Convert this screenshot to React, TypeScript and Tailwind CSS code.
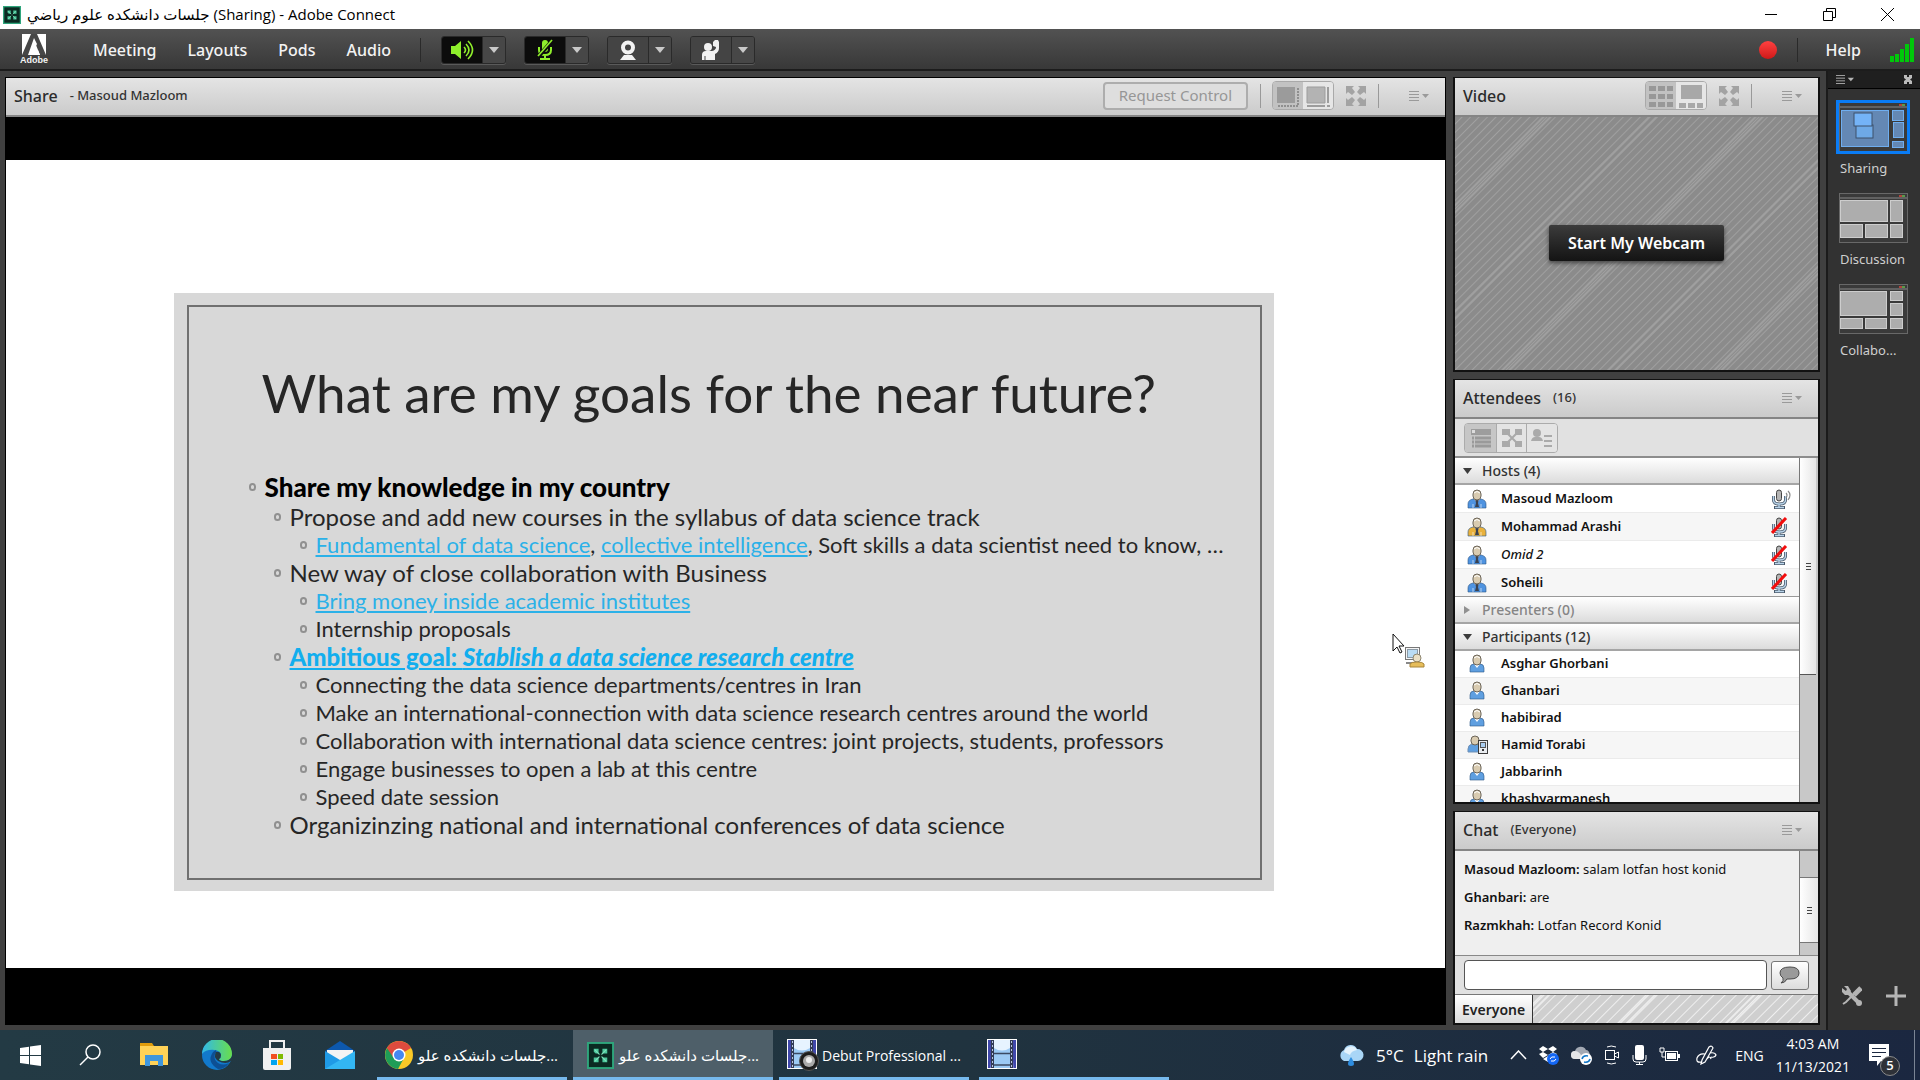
import React from "react";
import clsx from "clsx";

type IconProps = { className?: string };

const hosts = [
  { name: "Masoud Mazloom", color: "#4f93e0", muted: false, italic: false },
  { name: "Mohammad Arashi", color: "#e9b13c", muted: true, italic: false },
  { name: "Omid 2", color: "#4f93e0", muted: true, italic: true },
  { name: "Soheili", color: "#4f93e0", muted: true, italic: false },
];

const participants = [
  { name: "Asghar Ghorbani", phone: false },
  { name: "Ghanbari", phone: false },
  { name: "habibirad", phone: false },
  { name: "Hamid Torabi", phone: true },
  { name: "Jabbarinh", phone: false },
  { name: "khashyarmanesh", phone: false },
];

const messages = [
  { from: "Masoud Mazloom", text: "salam lotfan host konid" },
  { from: "Ghanbari", text: "are" },
  { from: "Razmkhah", text: "Lotfan Record Konid" },
];

/* ---------- icons ---------- */

function ConnectIcon({ className }: IconProps) {
  return (
    <svg viewBox="0 0 28 28" className={className} aria-hidden="true">
      <rect x="1" y="1" width="26" height="26" fill="#0b2a22" stroke="#2fa57c" strokeWidth="2" />
      <g fill="#4cc79b">
        <path d="M7 7h5v5H9L7 10z M16 7h5v5h-5z M7 16h5v5H7z M16 16h5v5h-5z" />
      </g>
      <path d="M8 8l12 12M20 8L8 20" stroke="#7fe3bd" strokeWidth="1.2" />
      <circle cx="14" cy="14" r="1.6" fill="#0b2a22" />
    </svg>
  );
}

function AdobeLogo({ className }: IconProps) {
  return (
    <svg viewBox="0 0 24 21" className={className} aria-hidden="true">
      <rect width="24" height="21" fill="#fff" />
      <path d="M9 0h6l9 21h-6l-2-5h-4l3-6-3-6L6 21H0z" fill="#474747" />
      <path d="M12 6l6 15h-4l-2-5H9z" fill="#fff" />
      <path d="M8 0L0 19V0zM16 0l8 19V0z" fill="#fff" />
    </svg>
  );
}

function SpeakerIcon() {
  return (
    <svg width="24" height="22" viewBox="0 0 24 22" aria-hidden="true">
      <path d="M1 7h4l6-5v18l-6-5H1z" fill="#8fef2c" />
      <path d="M14 8q3 3 0 6M16 5q6 6 0 12M18 2q9 9 0 18" fill="none" stroke="#8fef2c" strokeWidth="1.6" />
    </svg>
  );
}

function MutedMicIcon() {
  return (
    <svg width="18" height="22" viewBox="0 0 18 22" aria-hidden="true">
      <rect x="6" y="1" width="6" height="12" rx="3" fill="#8fef2c" />
      <path d="M3 8v3q0 5 6 5t6-5V8M9 16v4M4 20h10" fill="none" stroke="#8fef2c" strokeWidth="2" />
      <path d="M2 18L16 2" stroke="#0c0c0c" strokeWidth="4" />
      <path d="M2 17L16 1" stroke="#8fef2c" strokeWidth="1.6" />
    </svg>
  );
}

function WebcamIcon() {
  return (
    <svg width="18" height="20" viewBox="0 0 18 20" aria-hidden="true">
      <circle cx="9" cy="7.5" r="5" fill="none" stroke="#f2f2f2" strokeWidth="4" />
      <path d="M5 15h8l4 5H1z" fill="#f2f2f2" />
    </svg>
  );
}

function RaiseHandIcon() {
  return (
    <svg width="20" height="22" viewBox="0 0 20 22" fill="#f2f2f2" aria-hidden="true">
      <circle cx="7" cy="8" r="4" />
      <path d="M1 21v-5q0-4 4-4h6q4-1 4-4l-3-1V3l2-2h3l1 2v6q0 4-4 6v6z" />
      <path d="M4 21v-4" stroke="#444" />
    </svg>
  );
}

function MenuIcon({ className }: IconProps) {
  return (
    <svg width="20" height="10" viewBox="0 0 20 10" className={className} aria-hidden="true">
      <path d="M0 .5h10M0 3.5h10M0 6.5h10M0 9.5h10" stroke="currentColor" />
      <path d="M13 3h7l-3.500 4z" fill="currentColor" />
    </svg>
  );
}

function ExpandIcon() {
  return (
    <svg width="20" height="20" viewBox="0 0 20 20" fill="#a3a3a3" aria-hidden="true">
      <path d="M0 0h8L6 2l3 4-3 3-4-3-2 2zM20 0v8l-2-2-4 3-3-3 3-4-2-2zM0 20v-8l2 2 4-3 3 3-3 4 2 2zM20 20h-8l2-2-3-4 3-3 4 3 2-2z" />
    </svg>
  );
}

function Person({ color, host }: { color: string; host?: boolean }) {
  return (
    <svg width="20" height="20" viewBox="0 0 20 20" aria-hidden="true">
      <path
        d={host ? "M1 19v-4q0-4 5-5h8q5 1 5 5v4z" : "M3 18v-4q0-4 4-4h6q4 0 4 4v4z"}
        fill={color}
        stroke="#2d5685"
        strokeOpacity=".6"
      />
      {host && <path d="M6 19v-4M14 19v-4" stroke="#fff" strokeOpacity=".6" />}
      <path d="M7 10l3 4 3-4z" fill="#fff" />
      {host && <path d="M8 10h4l-1 4 1 4h-4l1-4z" fill="#3b4250" />}
      <rect x="6" y="1" width="8" height="10" rx="4" fill="#d9cbb0" stroke="#6b6459" />
      <path d="M7 4q3-3 6 0" stroke="#fff" fill="none" />
    </svg>
  );
}

function PhonePerson() {
  return (
    <svg width="22" height="20" viewBox="0 0 22 20" aria-hidden="true">
      <path d="M1 17v-3q0-4 4-5h7v8z" fill="#5f9fe0" stroke="#6f8fb5" />
      <rect x="4" y="1" width="8" height="9" rx="4" fill="#d9cbb0" stroke="#6b6459" />
      <rect x="11.500" y="5.500" width="9" height="13" fill="#e9ecf0" stroke="#3c3c3c" />
      <rect x="13.500" y="7.500" width="5" height="5" fill="#a9cdf0" stroke="#555" />
      <path d="M15 15h2" stroke="#333" strokeWidth="2" />
    </svg>
  );
}

function MicStatus({ muted }: { muted: boolean }) {
  return (
    <svg width="22" height="20" viewBox="0 0 22 20" aria-hidden="true">
      <path d="M2.500 7v4q0 4 6 4t6-4V7M8 15v3M3 18.500h11" fill="none" stroke="#4a5a6b" strokeWidth="3" />
      <path d="M2.500 7v4q0 4 6 4t6-4V7M8 15v3M4 18.500h9" fill="none" stroke="#b9d4ea" strokeWidth="1.400" />
      <rect x="5.500" y="1" width="5" height="11" rx="2.500" fill="#b5b5b5" stroke="#444" />
      {muted ? (
        <path d="M1 16L15 1" stroke="#f20d0d" strokeWidth="3" />
      ) : (
        <path d="M15 4q2 2 0 5M17 2q4 4 0 9" fill="none" stroke="#8a8a8a" strokeWidth="1.200" />
      )}
    </svg>
  );
}

function Stage() {
  return (
    <svg width="28" height="26" viewBox="0 0 28 26" aria-hidden="true">
      <path d="M3 4h18v16H3z" fill="#9b9b9b" />
      <path d="M24 5v18H3" fill="none" stroke="#8f8f8f" strokeWidth="2" strokeDasharray="2 1" />
    </svg>
  );
}

function StageFull() {
  return (
    <svg width="28" height="26" viewBox="0 0 28 26" aria-hidden="true">
      <path d="M3 4h18v16H3z" fill="#b3b3b3" stroke="#9d9d9d" />
      <path d="M24 4v16M3 23h18M23 23h3" stroke="#9d9d9d" strokeWidth="2" />
    </svg>
  );
}

function GridIcon() {
  return (
    <svg width="28" height="26" viewBox="0 0 28 26" fill="#989898" aria-hidden="true">
      <path d="M2 3h7v5H2zM11 3h7v5h-7zM20 3h6v5h-6zM2 11h7v5H2zM11 11h7v5h-7zM20 11h6v5h-6zM2 19h7v5H2zM11 19h7v5h-7zM20 19h6v5h-6z" />
    </svg>
  );
}

function FilmstripIcon() {
  return (
    <svg width="28" height="26" viewBox="0 0 28 26" fill="#a8a8a8" aria-hidden="true">
      <path d="M4 2h21v14H4zM2 20h7v5H2zM11 20h7v5h-7zM20 20h6v5h-6z" />
    </svg>
  );
}

function ScrollGrip() {
  return (
    <svg width="5" height="7" viewBox="0 0 5 7" aria-hidden="true">
      <path d="M0 .5h5M0 3.500h5M0 6.500h5" stroke="#444" />
    </svg>
  );
}

/* ---------- shared pieces ---------- */

function PodHeader({ title, note, children }: { title: string; note?: string; children?: React.ReactNode }) {
  return (
    <div className="flex h-[39px] shrink-0 items-center border-b-2 border-[#858585] bg-gradient-to-b from-[#e4e4e4] to-[#cbcbcb] pb-[2px] pl-2">
      <h2 className="text-[16px] font-medium text-[#2b2b2b]">{title}</h2>
      {note && <span className="pl-3 text-[13px] font-medium text-[#333]">{note}</span>}
      <div className="ml-auto flex h-full items-center">
        {children}
        <button aria-label={`${title} options`} className="mr-4 text-[#9a9a9a]">
          <MenuIcon />
        </button>
      </div>
    </div>
  );
}

function ViewControls({ left, right }: { left: React.ReactNode; right: React.ReactNode }) {
  return (
    <>
      <div className="flex h-[29px] overflow-hidden rounded-sm border border-[#a9a9a9]">
        <button aria-label="First view" className="flex w-[30px] items-center justify-center bg-[#c2c2c2]">{left}</button>
        <button aria-label="Second view" className="flex w-[30px] items-center justify-center bg-[#e6e6e6]">{right}</button>
      </div>
      <button aria-label="Full screen" className="ml-3"><ExpandIcon /></button>
      <span className="mr-[30px] ml-3 h-6 w-px bg-[#999]" />
    </>
  );
}

function ToolbarButton({ label, active, children }: { label: string; active?: boolean; children: React.ReactNode }) {
  return (
    <div className="mr-[18px] flex h-7 overflow-hidden rounded-[3px] border border-[#2a2a2a] shadow-[0_1px_0_#5a5a5a]">
      <button
        aria-label={label}
        className={clsx("flex w-[41px] items-center justify-center border-r border-[#2a2a2a]", active ? "bg-[#0c0c0c]" : "bg-[#444]")}
      >
        {children}
      </button>
      <button aria-label={`${label} options`} className="flex w-[22px] items-center justify-center bg-[#474747]">
        <svg width="10" height="6" viewBox="0 0 10 6" aria-hidden="true"><path d="M0 0h10L5 6z" fill="#c9c9c9" /></svg>
      </button>
    </div>
  );
}

function GroupHeader({ label, open }: { label: string; open: boolean }) {
  return (
    <button
      className={clsx(
        "flex h-[27px] w-full shrink-0 items-center border-b-2 border-[#a5a5a5] bg-gradient-to-b from-white to-[#dcdcdc] pl-[7px] text-[14px] font-medium",
        open ? "text-[#333]" : "text-[#858585]",
      )}
    >
      <svg width="10" height="10" viewBox="0 0 10 10" className="mr-[10px]" aria-hidden="true">
        <path d={open ? "M1 2h9L5.500 8z" : "M2 1v8l6-4z"} fill={open ? "#3c3c3c" : "#909090"} />
      </svg>
      {label}
    </button>
  );
}

/* ---------- title and menu ---------- */

function TitleBar() {
  return (
    <div className="flex h-[29px] shrink-0 items-center bg-white pl-[3px] font-['Open_Sans','DejaVu_Sans',sans-serif] text-black">
      <ConnectIcon className="size-[18px]" />
      <span className="pl-[6px] text-[15px]">جلسات دانشكده علوم رياضي (Sharing) - Adobe Connect</span>
      <div className="ml-auto flex h-full">
        <button aria-label="Minimize" className="flex w-[58px] items-center justify-center">
          <svg width="12" height="12" viewBox="0 0 12 12" aria-hidden="true"><path d="M0 5.500h12" stroke="#000" /></svg>
        </button>
        <button aria-label="Restore" className="flex w-[58px] items-center justify-center">
          <svg width="13" height="13" viewBox="0 0 13 13" fill="none" stroke="#000" aria-hidden="true">
            <path d="M.5 3.500h9v9h-9zM3.500 3.500v-3h9v9h-3" />
          </svg>
        </button>
        <button aria-label="Close" className="mr-1 flex w-[58px] items-center justify-center">
          <svg width="13" height="13" viewBox="0 0 13 13" aria-hidden="true"><path d="M0 0l13 13M13 0L0 13" stroke="#000" /></svg>
        </button>
      </div>
    </div>
  );
}

function MenuBar() {
  return (
    <nav className="flex h-[42px] shrink-0 items-center border-b-2 border-[#1c1c1c] bg-gradient-to-b from-[#525252] to-[#383838] pt-px text-[16px] font-medium text-[#f3f3f3]">
      <div className="ml-[22px] flex w-6 flex-col items-center">
        <AdobeLogo className="h-[21px] w-6" />
        <span className="font-['Liberation_Sans',sans-serif] text-[9px] leading-[10px] font-bold">Adobe</span>
      </div>
      <div className="ml-[47px] flex gap-[31px]">
        <button>Meeting</button>
        <button>Layouts</button>
        <button>Pods</button>
        <button>Audio</button>
      </div>
      <span className="mr-5 ml-[29px] h-6 w-px bg-[#2a2a2a]" />
      <ToolbarButton label="Speakers" active><SpeakerIcon /></ToolbarButton>
      <ToolbarButton label="Microphone" active><MutedMicIcon /></ToolbarButton>
      <ToolbarButton label="Webcam"><WebcamIcon /></ToolbarButton>
      <ToolbarButton label="Set status"><RaiseHandIcon /></ToolbarButton>
      <span className="ml-auto size-[18px] rounded-full bg-gradient-to-b from-[#ff4040] to-[#cf1717]" />
      <span className="mx-5 h-6 w-px bg-[#2a2a2a]" />
      <button className="ml-2">Help</button>
      <svg width="25" height="24" viewBox="0 0 25 24" fill="#00c80a" className="mr-[5px] ml-[29px]" aria-hidden="true">
        <path d="M0 18h4v6H0zM5 16h4v8H5zM10 11h4v13h-4zM15 6h4v18h-4zM20 0h4v24h-4z" />
      </svg>
    </nav>
  );
}

/* ---------- share pod ---------- */

const bulletStyle: Record<number, string> = {
  1: "text-[26px] leading-[32px] font-black text-black",
  2: "pl-[25px] text-[24px] leading-[28px]",
  3: "pl-[51px] text-[22px] leading-[28px]",
};

function Bullet({ level, children }: { level: 1 | 2 | 3; children: React.ReactNode }) {
  return (
    <li className={clsx("flex items-center whitespace-nowrap", bulletStyle[level])}>
      <span className="mr-[9px] h-2 w-[7px] shrink-0 rounded-full border-2 border-[#909090]" />
      <span>{children}</span>
    </li>
  );
}

function Slide() {
  return (
    <article className="mx-auto h-[598px] w-[1100px] max-w-full bg-[#d8d8d8] pt-3 pr-3 pb-[11px] pl-[13px] font-['Lato',sans-serif] text-[#262626]">
      <div className="h-full border-2 border-[#707070]">
        <h1 className="pt-[54px] pl-[73px] text-[53px] leading-[64px] whitespace-nowrap">
          What are my goals for the near future?
        </h1>
        <ul className="pt-[46px] pl-[60px]">
          <Bullet level={1}>Share my knowledge in my country</Bullet>
          <Bullet level={2}>Propose and add new courses in the syllabus of data science track</Bullet>
          <Bullet level={3}>
            <a href="#fundamental" className="text-[#2bb1e8] underline">Fundamental of data science</a>,{" "}
            <a href="#collective" className="text-[#2bb1e8] underline">collective intelligence</a>, Soft skills a data
            scientist need to know, …
          </Bullet>
          <Bullet level={2}>New way of close collaboration with Business</Bullet>
          <Bullet level={3}>
            <a href="#money" className="text-[#2bb1e8] underline">Bring money inside academic institutes</a>
          </Bullet>
          <Bullet level={3}>Internship proposals</Bullet>
          <Bullet level={2}>
            <a href="#goal" className="font-black text-[#12aeee] underline">
              Ambitious goal: <em>Stablish a data science research centre</em>
            </a>
          </Bullet>
          <Bullet level={3}>Connecting the data science departments/centres in Iran</Bullet>
          <Bullet level={3}>Make an international-connection with data science research centres around the world</Bullet>
          <Bullet level={3}>Collaboration with international data science centres: joint projects, students, professors</Bullet>
          <Bullet level={3}>Engage businesses to open a lab at this centre</Bullet>
          <Bullet level={3}>Speed date session</Bullet>
          <Bullet level={2}>Organizinzing national and international conferences of data science</Bullet>
        </ul>
      </div>
    </article>
  );
}

function SharePointer() {
  return (
    <svg width="34" height="36" viewBox="0 0 34 36" className="absolute top-[516px] left-[1386px]" aria-hidden="true">
      <path d="M1 1v17l4-4 3 6 2-1-3-6h5z" fill="#fff" stroke="#111" />
      <rect x="13.500" y="14.500" width="14" height="12" fill="#f4f4f4" stroke="#777" />
      <rect x="15.500" y="16.500" width="10" height="8" fill="#b9dbf3" stroke="#8b9aa6" />
      <path d="M14 30h8" stroke="#888" strokeWidth="2" />
      <circle cx="25" cy="25" r="4" fill="#eadfc4" stroke="#8d8670" />
      <path d="M18 34v-3q1-2 7-2t7 2v3z" fill="#e6bd5a" stroke="#a8853a" />
    </svg>
  );
}

function SharePod() {
  return (
    <section className="flex min-w-0 flex-1 flex-col border border-black bg-black">
      <PodHeader title="Share" note="- Masoud Mazloom">
        <button disabled className="mr-3 h-7 rounded-[4px] border-2 border-[#adadad] bg-[#dedede] px-[14px] text-[15px] text-[#969696]">
          Request Control
        </button>
        <span className="mr-[11px] h-6 w-px bg-[#999]" />
        <ViewControls left={<Stage />} right={<StageFull />} />
      </PodHeader>
      <div className="relative flex flex-1 flex-col pt-[43px] pb-14">
        <div className="flex-1 bg-white pt-[133px] pr-1">
          <Slide />
        </div>
        <SharePointer />
      </div>
    </section>
  );
}

/* ---------- right column ---------- */

function VideoPod() {
  return (
    <section className="flex h-[295px] shrink-0 flex-col border-2 border-t border-[#111]">
      <PodHeader title="Video">
        <ViewControls left={<GridIcon />} right={<FilmstripIcon />} />
      </PodHeader>
      <div className="flex flex-1 items-center justify-center bg-[#8b8b8b] bg-[repeating-linear-gradient(135deg,transparent_0px,transparent_61px,#9f9f9f_62px,#9f9f9f_63px,transparent_64px,transparent_66px,#9f9f9f_67px,#9f9f9f_68px,transparent_69px,transparent_75px),repeating-linear-gradient(135deg,transparent_0px,transparent_4px,#a0a0a0_5px,transparent_6px)] pb-[2px]">
        <button className="h-9 rounded-[2px] bg-gradient-to-b from-[#3c3c3c] to-[#141414] px-[19px] text-[16px] font-semibold text-white shadow-[0_2px_4px_#444]">
          Start My Webcam
        </button>
      </div>
    </section>
  );
}

function AttendeesPod() {
  return (
    <section className="mt-[7px] flex h-[425px] shrink-0 flex-col border-2 border-t border-[#111] bg-white">
      <PodHeader title="Attendees" note="(16)" />
      <div className="flex h-[39px] shrink-0 items-center border-b-2 border-[#8d8d8d] bg-[#e1e1e1] pl-[9px]">
        <div className="flex h-[30px] overflow-hidden rounded-sm border border-[#ababab]">
          <button aria-label="Attendee list" className="flex w-[31px] items-center justify-center bg-[#c6c6c6]">
            <svg width="20" height="20" viewBox="0 0 20 20" aria-hidden="true">
              <path d="M0 1h20v6H0z" fill="#9d9d9d" />
              <path d="M1 2h3v3H1z" fill="#ddd" />
              <path d="M1 10h2M4 10h16M1 14h2M4 14h16M1 18h2M4 18h16" stroke="#9a9a9a" strokeWidth="3" />
            </svg>
          </button>
          <button aria-label="Breakout rooms" className="flex w-[31px] items-center justify-center border-x border-[#ababab] bg-[#e4e4e4]">
            <svg width="20" height="18" viewBox="0 0 20 18" fill="#aaa" aria-hidden="true">
              <path d="M0 0h8v6H0zM13 0h7v6h-7zM0 12h8v6H0zM13 12h7v6h-7z" />
              <path d="M6 5l8 8M14 5l-8 8" stroke="#aaa" strokeWidth="2" />
            </svg>
          </button>
          <button aria-label="Attendee status" className="flex w-[30px] items-center justify-center bg-[#e4e4e4]">
            <svg width="22" height="18" viewBox="0 0 22 18" fill="#aaa" aria-hidden="true">
              <circle cx="6" cy="4" r="4" />
              <path d="M0 12q1-4 4-4h4q3 0 4 4z" />
              <path d="M13 7h8M13 12h8M13 17h8" stroke="#aaa" strokeWidth="2" />
            </svg>
          </button>
        </div>
      </div>
      <div className="flex min-h-0 flex-1">
        <div className="min-w-0 flex-1 overflow-hidden">
          <GroupHeader label="Hosts (4)" open />
          <ul>
            {hosts.map((h) => (
              <li key={h.name} className="flex h-7 items-center border-b border-[#ebebeb] pr-[6px] pl-3 text-[13px] font-semibold text-[#111] last:border-[#999] even:bg-[#f6f6f6]">
                <Person color={h.color} host />
                <span className={clsx("flex-1 pl-[14px]", h.italic && "font-medium italic")}>{h.name}</span>
                <MicStatus muted={h.muted} />
              </li>
            ))}
          </ul>
          <GroupHeader label="Presenters (0)" open={false} />
          <GroupHeader label="Participants (12)" open />
          <ul>
            {participants.map((p) => (
              <li key={p.name} className="flex h-[27px] items-center border-b border-[#ebebeb] pl-3 text-[13px] font-semibold text-[#111] even:bg-[#f6f6f6]">
                <span className="w-[34px]">{p.phone ? <PhonePerson /> : <Person color="#5f9fe0" />}</span>
                {p.name}
              </li>
            ))}
          </ul>
        </div>
        <div className="w-[19px] border-l border-[#777] bg-[#c8c8c8] pr-[2px]">
          <div className="flex h-[217px] items-center justify-center border-b border-[#555] bg-gradient-to-r from-white to-[#e6e6e6]">
            <ScrollGrip />
          </div>
        </div>
      </div>
    </section>
  );
}

function ChatPod() {
  return (
    <section className="mt-[7px] flex min-h-0 flex-1 flex-col border-2 border-t border-[#111] bg-[#e1e1e1]">
      <PodHeader title="Chat" note="(Everyone)" />
      <div className="flex min-h-0 flex-1">
        <div className="flex-1 bg-[#efefef] px-[9px] pt-1 text-[13px] leading-7 text-[#111]">
          {messages.map((m) => (
            <p key={m.from}>
              <b className="font-semibold">{m.from}:</b> {m.text}
            </p>
          ))}
        </div>
        <div className="w-[19px] border-l border-[#777] bg-[#c8c8c8] pt-[26px]">
          <div className="flex h-[66px] items-center justify-center border-y border-[#777] bg-gradient-to-r from-white to-[#e6e6e6]">
            <ScrollGrip />
          </div>
        </div>
      </div>
      <div className="flex h-[39px] items-center gap-1 border-t border-[#888] px-[9px]">
        <input aria-label="Message" type="text" className="h-[30px] min-w-0 flex-1 rounded-[4px] border border-[#555] bg-white px-2 text-[13px]" />
        <button aria-label="Send message" className="flex h-[29px] w-[38px] items-center justify-center rounded-[3px] border border-[#777] bg-gradient-to-b from-white to-[#dcdcdc]">
          <svg width="22" height="18" viewBox="0 0 22 18" aria-hidden="true">
            <path d="M11 1q9 0 9 6t-9 6H8q-2 4-6 4 3-2 2-5-3-2-3-5 0-6 10-6z" fill="#9a9a9a" stroke="#4b4b4b" />
          </svg>
        </button>
      </div>
      <div className="flex h-[29px] shrink-0 border-t border-[#777] bg-[#cfcfcf] bg-[repeating-linear-gradient(135deg,transparent_0px,transparent_60px,#ececec_61px,#ececec_62px,transparent_63px,transparent_65px,#ececec_66px,#ececec_67px,transparent_68px,transparent_75px),repeating-linear-gradient(135deg,transparent_0px,transparent_6px,#efefef_7px,transparent_8px)]">
        <button className="border-r border-[#333] bg-gradient-to-b from-white to-[#dcdcdc] px-[7px] text-[14px] font-semibold text-[#222]">
          Everyone
        </button>
      </div>
    </section>
  );
}

/* ---------- layout switcher ---------- */

const layouts = [
  { name: "Sharing", rects: [[3, 9, 47, 36], [54, 9, 11, 10], [55, 21, 10, 15], [54, 40, 11, 6]] },
  { name: "Discussion", rects: [[2, 8, 47, 21], [52, 8, 12, 21], [2, 32, 22, 13], [27, 32, 22, 13], [52, 32, 12, 13]] },
  { name: "Collabo...", rects: [[2, 8, 46, 24], [52, 8, 12, 9], [52, 20, 12, 12], [2, 35, 22, 10], [27, 35, 21, 10], [52, 35, 12, 10]] },
];

function LayoutBar() {
  return (
    <aside className="flex w-[94px] shrink-0 flex-col border-l-2 border-[#1b1b1b] bg-[#323232]">
      <div className="flex h-[18px] items-center justify-between border-b border-black bg-[#1f1f1f] px-2 text-[#b5b5b5]">
        <MenuIcon className="h-[9px] w-[18px]" />
        <svg width="8" height="9" viewBox="0 0 8 9" aria-hidden="true">
          <path d="M0 0h3v2h2V0h3v3L6 4.500 8 6v3H5V7H3v2H0V6l2-1.500L0 3z" fill="#bbb" />
        </svg>
      </div>
      <div className="flex flex-col pt-[11px] pl-2">
        {layouts.map((l, i) => (
          <button key={l.name} className="mb-[13px] text-left">
            <svg
              width="74"
              height="54"
              viewBox="-3 -2 74 54"
              className={clsx(i === 0 && "outline-3 -outline-offset-3 outline-[#0a7cf5]")}
              aria-hidden="true"
            >
              <rect x="0.500" y="0.500" width="68" height="49" fill="#3a3a3a" stroke="#686868" />
              <path d="M1 5h67" stroke="#888" />
              <path d="M60 3h3" stroke="#b0433b" strokeWidth="2" />
              <path d="M63 3h3" stroke="#5b9a4a" strokeWidth="2" />
              {l.rects.map(([x, y, w, h], n) => (
                <rect key={n} x={x - 0.5} y={y - 0.5} width={w} height={h} fill={i === 0 ? "#6488b4" : "#adadad"} stroke={i === 0 ? "#6faef0" : "#cdcdcd"} />
              ))}
              {i === 0 && (
                <g fill="#6ea9e6" stroke="#3d506b">
                  <rect x="17" y="23" width="17" height="13" />
                  <rect x="15" y="11" width="18" height="13" fill="#74b3f7" />
                </g>
              )}
            </svg>
            <span className="block pt-1 pl-1 text-[13px] leading-5 text-[#cfcfcf]">{l.name}</span>
          </button>
        ))}
      </div>
      <div className="mt-auto flex gap-6 pb-6 pl-[14px]">
        <button aria-label="Manage layouts">
          <svg width="20" height="20" viewBox="0 0 20 20" fill="none" stroke="#b5b5b5" aria-hidden="true">
            <path d="M5 5l11 11" strokeWidth="4" />
            <path d="M0 2v4l3 3h4l2-4-3-5H2l3 3-1 2z" fill="#b5b5b5" stroke="none" />
            <path d="M19 2l-7 7" strokeWidth="5" />
            <path d="M12 8l-8 8-3 2" strokeWidth="2" />
            <circle cx="17" cy="17" r="3" fill="#b5b5b5" stroke="none" />
          </svg>
        </button>
        <button aria-label="Add layout">
          <svg width="20" height="20" viewBox="0 0 20 20" aria-hidden="true"><path d="M10 0v20M0 10h20" stroke="#b5b5b5" strokeWidth="3" /></svg>
        </button>
      </div>
    </aside>
  );
}

/* ---------- taskbar ---------- */

function ChromeIcon() {
  return (
    <svg width="28" height="28" viewBox="0 0 28 28" aria-hidden="true">
      <circle cx="14" cy="14" r="14" fill="#f9c927" />
      <path d="M14 14L2 7a14 14 0 0 1 24 0z" fill="#dd4b3e" />
      <path d="M2 7a14 14 0 0 0 11 21l6-11-5-3z" fill="#1f9d57" />
      <path d="M14 7h12.100A14 14 0 0 0 2 7l6 9z" fill="#dd4b3e" />
      <circle cx="14" cy="14" r="6.500" fill="#fff" />
      <circle cx="14" cy="14" r="5" fill="#4688f1" />
    </svg>
  );
}

function FilmIcon({ lens }: { lens?: boolean }) {
  return (
    <svg width="32" height="32" viewBox="0 0 32 32" aria-hidden="true">
      <rect x="0.500" y="0.500" width="29" height="29" fill="#7b82d8" stroke="#fff" />
      <path d="M1 1h6L3 29H1zM29 1h-6l4 28h2z" fill="#4047ab" />
      <path d="M7 1h16v28H7z" fill="#9ccaf5" />
      <path d="M7 1h16v8q-8 5-16 0z" fill="#e6f3ff" />
      <path d="M5.500 1v28M24.500 1v28" stroke="#333c55" strokeWidth="3" />
      <path d="M5.500 2v27M24.500 2v27" stroke="#b9c6e6" strokeDasharray="2 2" />
      <path d="M7 14.500h16M7 26h16" stroke="#3b4a63" strokeWidth="1.500" />
      {lens && (
        <g>
          <circle cx="22" cy="22" r="9.500" fill="#1e1e1e" stroke="#555" />
          <circle cx="22" cy="22" r="6" fill="#aaa" />
          <circle cx="22" cy="21" r="3" fill="#f0f0f0" />
        </g>
      )}
    </svg>
  );
}

function TaskButton({ active, children }: { active?: boolean; children: React.ReactNode }) {
  return (
    <button
      className={clsx(
        "flex h-full items-center gap-[3px] overflow-hidden border-b-3 border-[#76b9ed] pt-[3px] whitespace-nowrap",
        active ? "mx-[6px] w-[200px] bg-[#4e5f69] pl-[14px]" : "w-[190px] pl-2",
      )}
    >
      {children}
    </button>
  );
}

function Taskbar() {
  return (
    <footer className="flex h-[50px] shrink-0 items-center bg-gradient-to-r from-[#233a44] via-[#20333f] to-[#1b2740] font-['Open_Sans','DejaVu_Sans',sans-serif] text-[14px] text-white">
      <div className="flex items-center gap-[38px] pr-[22px] pl-5">
        <button aria-label="Start">
          <svg width="21" height="21" viewBox="0 0 21 21" fill="#fff" aria-hidden="true">
            <path d="M0 3l9-1.300V10H0zM10 1.500L21 0v10H10zM0 11h9v8.300L0 18zM10 11h11v10l-11-1.500z" />
          </svg>
        </button>
        <button aria-label="Search">
          <svg width="22" height="22" viewBox="0 0 22 22" fill="none" stroke="#fff" strokeWidth="1.500" aria-hidden="true">
            <circle cx="14" cy="8" r="7" />
            <path d="M9 13l-8 8" />
          </svg>
        </button>
        <button aria-label="File Explorer" className="pl-px">
          <svg width="28" height="24" viewBox="0 0 28 24" aria-hidden="true">
            <path d="M0 0h12l2 3H0z" fill="#e09c0c" />
            <path d="M0 3h28v19H0z" fill="#ffd257" />
            <path d="M5 23V12h18v11h-5v-5h-8v5z" fill="#3f96dd" />
          </svg>
        </button>
        <button aria-label="Edge" className="-mx-1">
          <svg width="30" height="30" viewBox="0 0 30 30" aria-hidden="true">
            <defs>
              <linearGradient id="edge" x1="0" x2="1">
                <stop offset="0" stopColor="#31b8ea" />
                <stop offset="1" stopColor="#69de4b" />
              </linearGradient>
            </defs>
            <circle cx="15" cy="15" r="15" fill="#1279cc" />
            <path d="M0 14a15 15 0 0 1 30 0q0 7-8 7-5 0-5-2 2-1 2-4 0-4-6-5Q4 9 0 14z" fill="url(#edge)" />
            <path d="M11 12q-7 10 5 17 7 0 11-6-6 3-11 0-5-4-3-9 2-3 1-4z" fill="#0d4f94" />
            <path d="M14 12q-3 5 2 9 8 4 13 0l1 3v-8q-2 5-8 5-5 0-5-2 2-1 2-4-1-4-5-3z" fill="#233a44" />
          </svg>
        </button>
        <button aria-label="Store" className="-ml-[3px]">
          <svg width="28" height="30" viewBox="0 0 28 30" aria-hidden="true">
            <path d="M7 9V1h14v8" fill="none" stroke="#f0f0f0" strokeWidth="2" />
            <path d="M0 8h28v20q0 2-2 2H2q-2 0-2-2z" fill="#f0f0f0" />
            <path d="M8 14h6v5H8z" fill="#f25022" />
            <path d="M15 14h5v5h-5z" fill="#7fba00" />
            <path d="M8 20h6v5H8z" fill="#00a4ef" />
            <path d="M15 20h5v5h-5z" fill="#ffb900" />
          </svg>
        </button>
        <button aria-label="Mail" className="-ml-1">
          <svg width="30" height="28" viewBox="0 0 30 28" aria-hidden="true">
            <path d="M0 10L15 0l15 10-15 9z" fill="#0d58ad" />
            <path d="M2 9h26v5L15 21 2 14z" fill="#f4f4f4" />
            <path d="M0 10l30 18H0z" fill="#1f9ae6" />
            <path d="M30 10L0 28h30z" fill="#33b6f3" />
          </svg>
        </button>
      </div>
      <TaskButton>
        <ChromeIcon />
        <span className="pl-[2px] text-[15px]">جلسات دانشکده علو...</span>
      </TaskButton>
      <TaskButton active>
        <ConnectIcon className="size-[27px]" />
        <span className="pl-[2px] text-[15px]">جلسات دانشکده علو...</span>
      </TaskButton>
      <TaskButton>
        <FilmIcon lens />
        <span>Debut Professional ...</span>
      </TaskButton>
      <div className="ml-[10px] h-full">
        <TaskButton><FilmIcon /></TaskButton>
      </div>

      <div className="ml-auto flex h-full items-center">
        <svg width="26" height="24" viewBox="0 0 26 24" aria-hidden="true">
          <path d="M6 18a6 6 0 0 1 0-11A7 7 0 0 1 19 6a6 6 0 0 1 1 12z" fill="#a9d6f7" />
          <path d="M6 9A7 7 0 0 1 19 7q-6 1-7 5-4-2-6-3z" fill="#e4f3fd" />
          <path d="M13 14q6 9 0 9t0-9z" fill="#2e8de0" />
        </svg>
        <span className="pt-[2px] pl-3 text-[17px]">5°C</span>
        <span className="pt-[2px] pl-[10px] text-[17px]">Light rain</span>
        <div className="flex items-center gap-3 pr-[18px] pl-[22px]">
          <svg width="17" height="10" viewBox="0 0 17 10" fill="none" stroke="#fff" strokeWidth="1.500" aria-hidden="true"><path d="M1 9l7.500-8L16 9" /></svg>
          <svg width="20" height="20" viewBox="0 0 20 20" aria-hidden="true">
            <path d="M0 4l4-3 5 3-5 3zM9 4l5-3 4 3-4 3zM0 9l4-2 5 3-5 3zM9 10l5-3 4 2-4 4zM4 14l5-3 4 3-4 3z" fill="#fff" />
            <circle cx="14" cy="14" r="6" fill="#1467f5" />
            <path d="M11 14q1-3 5-2M17 14q-1 3-5 2" fill="none" stroke="#fff" />
          </svg>
          <svg width="21" height="20" viewBox="0 0 21 20" aria-hidden="true">
            <path d="M4 14a4 4 0 0 1 0-8 6 6 0 0 1 11-1q3 0 4 5v4z" fill="#a3a9b3" />
            <path d="M4 14a4 4 0 0 1 0-8q5 0 8 8z" fill="#e3e5e8" />
            <circle cx="15" cy="14" r="6" fill="#fff" />
            <path d="M11 14q1-4 6-3M19 14q-1 4-6 3" fill="none" stroke="#1478c8" strokeWidth="1.500" />
          </svg>
          <svg width="16" height="20" viewBox="0 0 16 20" fill="none" stroke="#fff" aria-hidden="true">
            <rect x="1.500" y="5.500" width="9" height="9" />
            <path d="M10.500 9l4-2v6l-4-2M3 2q4-2 9 0M3 18q4 2 9 0" />
          </svg>
          <svg width="15" height="20" viewBox="0 0 15 20" aria-hidden="true">
            <rect x="3" y="0" width="9" height="15" rx="2" fill="#fff" />
            <path d="M1 10v4q0 3 3 3h7q3 0 3-3v-4M7.500 17v2M4 19.500h7" fill="none" stroke="#fff" />
          </svg>
          <svg width="21" height="16" viewBox="0 0 21 16" aria-hidden="true">
            <path d="M1 1v4h4V1M3 5v5h3M2 0v2M4 0v2" fill="none" stroke="#fff" />
            <rect x="6.500" y="4.500" width="12" height="9" fill="none" stroke="#fff" />
            <path d="M8 6h9v6H8zM19 7h2v4h-2z" fill="#fff" />
          </svg>
          <svg width="21" height="20" viewBox="0 0 21 20" fill="none" stroke="#fff" strokeWidth="1.200" className="ml-1" aria-hidden="true">
            <path d="M13 2q3-2 4 1L9 17l-4 2 1-4zM9 9q-6-1-8 4-1 5 4 4M14 8q5-1 6 2-1 3-5 2M11 14q3-4 4 0" />
          </svg>
        </div>
        <span className="pr-[12px]">ENG</span>
        <div className="text-center text-[14px] leading-[23px]">
          <div>4:03 AM</div>
          <div>11/13/2021</div>
        </div>
        <button aria-label="Notifications" className="relative mr-[14px] ml-[19px] h-[34px] w-[31px]">
          <svg width="20" height="22" viewBox="0 0 20 22" aria-hidden="true">
            <path d="M0 0h20v17h-8l-4 5v-5H0z" fill="#fff" />
            <path d="M3 4.500h14M3 8.500h14M3 12.500h9" stroke="#1b2740" />
          </svg>
          <span className="absolute right-0 -bottom-1 flex size-5 items-center justify-center rounded-full border border-[#8a8a8a] bg-[#2e3138] text-[13px] font-semibold">
            5
          </span>
        </button>
        <span className="mr-[5px] h-full w-px bg-[#7a8494]" />
      </div>
    </footer>
  );
}

export default function App() {
  return (
    <div className="flex h-screen flex-col overflow-hidden bg-[#404040] font-['Noto_Sans',sans-serif]">
      <TitleBar />
      <MenuBar />
      <main className="flex min-h-0 flex-1">
        <div className="flex min-w-0 flex-1 gap-[7px] pt-[6px] pr-[6px] pb-[5px] pl-[5px]">
          <SharePod />
          <div className="flex w-[367px] shrink-0 flex-col">
            <VideoPod />
            <AttendeesPod />
            <ChatPod />
          </div>
        </div>
        <LayoutBar />
      </main>
      <Taskbar />
    </div>
  );
}
